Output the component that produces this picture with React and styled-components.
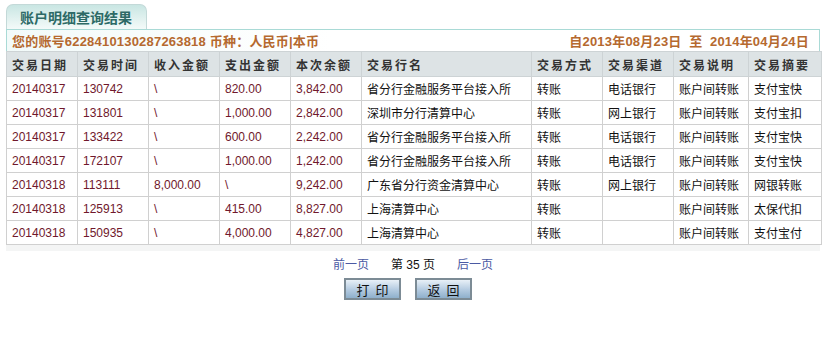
import React from "react";
import styled, { createGlobalStyle } from "styled-components";

const GlobalStyle = createGlobalStyle`
  body {
    margin: 0;
    background: #fff;
    font-family: "Liberation Sans", Arial, "Noto Sans CJK SC", sans-serif;
    font-size: 12px;
  }
`;

const Page = styled.div`
  padding: 4px 5px 0 6px;
  width: 814px;
`;

const Tab = styled.div`
  width: 141px;
  height: 25px;
  box-sizing: border-box;
  border: 1px solid #c3d9d8;
  border-bottom: none;
  border-radius: 7px 7px 0 0;
  background: linear-gradient(180deg, #c9e6e3 0%, #f4faf9 100%);
  display: flex;
  align-items: center;
  padding-left: 13px;
  color: #2d6a66;
  font-weight: bold;
  font-size: 14px;
  font-family: "Noto Sans CJK SC", sans-serif;
`;

const InfoBar = styled.div`
  height: 22px;
  box-sizing: border-box;
  border: 1px solid #a9dad6;
  border-bottom: none;
  background: linear-gradient(90deg, #f2faf9 0%, #ffffff 40%);
  display: flex;
  justify-content: space-between;
  align-items: center;
  padding: 0 10px 0 5px;
  color: #b5692f;
  font-weight: bold;
  font-size: 13px;
  letter-spacing: 0.2px;
  font-family: "Liberation Sans", "Noto Sans CJK SC", sans-serif;
`;

const Table = styled.table`
  width: 814px;
  border-collapse: collapse;
  table-layout: fixed;
  border: 1px solid #d0d0d0;
`;

const Th = styled.th`
  height: 24px;
  background: #dde3e5;
  border: 1px solid #cdd3d5;
  text-align: left;
  padding: 0 0 0 5px;
  font-weight: bold;
  font-size: 12px;
  letter-spacing: 2px;
  color: #333;
  font-family: "Noto Sans CJK SC", sans-serif;
`;

const Td = styled.td`
  height: 23px;
  border: 1px solid #d0d0d0;
  padding: 0 0 0 5px;
  font-size: 12px;
  white-space: nowrap;
  overflow: hidden;
  color: ${(p) => (p.$num ? "#70182c" : "#111")};
  font-family: ${(p) =>
    p.$num ? '"Liberation Sans", Arial, sans-serif' : '"Noto Sans CJK SC", sans-serif'};
`;

const Shade = styled.div`
  height: 6px;
  background: #f4f5f5;
`;

const Pager = styled.div`
  display: flex;
  justify-content: center;
  gap: 22px;
  margin-top: 2px;
  height: 20px;
  align-items: center;
  font-family: "Liberation Sans", "Noto Sans CJK SC", sans-serif;
`;

const PageLink = styled.a`
  color: #4b5aa3;
  text-decoration: none;
  cursor: pointer;
`;

const PageNo = styled.span`
  color: #111;
`;

const Buttons = styled.div`
  display: flex;
  justify-content: center;
  gap: 14px;
  margin-top: 5px;
  padding-right: 10px;
`;

const Button = styled.button`
  width: 57px;
  height: 22px;
  border: 2px solid #7c8b95;
  background: linear-gradient(180deg, #e8f0f7 0%, #b3cae0 55%, #8fb0cc 100%);
  font-family: "Noto Sans CJK SC", sans-serif;
  font-size: 13px;
  letter-spacing: 6px;
  padding: 0 0 0 6px;
  color: #111;
  cursor: pointer;
`;

const widths = [71, 71, 71, 71, 71, 170, 71, 71, 75, 73];
const heads = ["交易日期", "交易时间", "收入金额", "支出金额", "本次余额", "交易行名", "交易方式", "交易渠道", "交易说明", "交易摘要"];

const rows = [
  ["20140317", "130742", "\\", "820.00", "3,842.00", "省分行金融服务平台接入所", "转账", "电话银行", "账户间转账", "支付宝快"],
  ["20140317", "131801", "\\", "1,000.00", "2,842.00", "深圳市分行清算中心", "转账", "网上银行", "账户间转账", "支付宝扣"],
  ["20140317", "133422", "\\", "600.00", "2,242.00", "省分行金融服务平台接入所", "转账", "电话银行", "账户间转账", "支付宝快"],
  ["20140317", "172107", "\\", "1,000.00", "1,242.00", "省分行金融服务平台接入所", "转账", "电话银行", "账户间转账", "支付宝快"],
  ["20140318", "113111", "8,000.00", "\\", "9,242.00", "广东省分行资金清算中心", "转账", "网上银行", "账户间转账", "网银转账"],
  ["20140318", "125913", "\\", "415.00", "8,827.00", "上海清算中心", "转账", "", "账户间转账", "太保代扣"],
  ["20140318", "150935", "\\", "4,000.00", "4,827.00", "上海清算中心", "转账", "", "账户间转账", "支付宝付"],
];

const App = () => {
  return (
    <>
      <GlobalStyle />
      <Page>
        <Tab>账户明细查询结果</Tab>
        <InfoBar>
          <span>您的账号6228410130287263818 币种：人民币|本币</span>
          <span>自2013年08月23日&nbsp;&nbsp;至&nbsp;&nbsp;2014年04月24日</span>
        </InfoBar>
        <Table>
          <colgroup>
            {widths.map((w, i) => (
              <col key={i} style={{ width: w }} />
            ))}
          </colgroup>
          <thead>
            <tr>
              {heads.map((h) => (
                <Th key={h}>{h}</Th>
              ))}
            </tr>
          </thead>
          <tbody>
            {rows.map((r, i) => (
              <tr key={i}>
                {r.map((c, j) => (
                  <Td key={j} $num={j < 5}>
                    {c}
                  </Td>
                ))}
              </tr>
            ))}
          </tbody>
        </Table>
        <Shade />
        <Pager>
          <PageLink>前一页</PageLink>
          <PageNo>第 35 页</PageNo>
          <PageLink>后一页</PageLink>
        </Pager>
        <Buttons>
          <Button>打印</Button>
          <Button>返回</Button>
        </Buttons>
      </Page>
    </>
  );
};

export default App;
